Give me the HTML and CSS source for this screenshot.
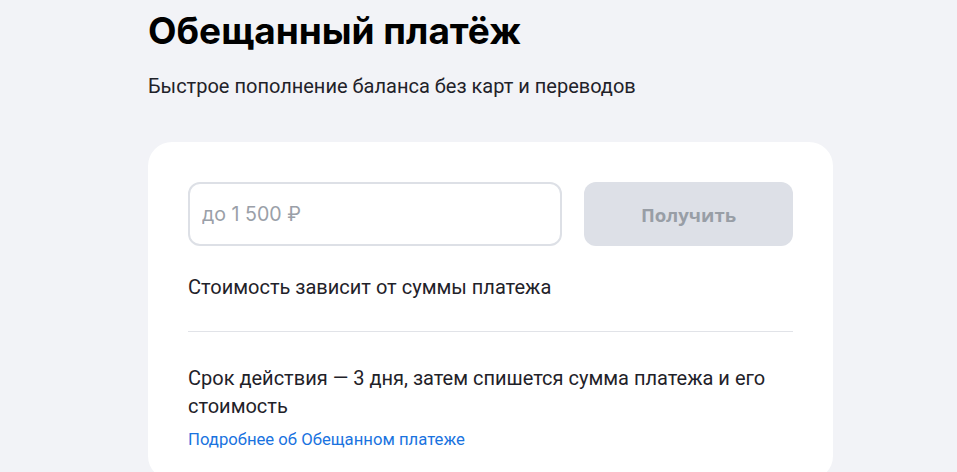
FILE: index.html
```html
<!DOCTYPE html>
<html lang="ru">
<head>
    <meta charset="UTF-8">
    <meta name="viewport" content="width=device-width, initial-scale=1.0">
    <title>Обещанный платёж</title>
    <link rel="stylesheet" href="styles.css">
</head>
<body>
<div class="container">
    <h1>Обещанный платёж</h1>
    <p class="subtitle">Быстрое пополнение баланса без карт и переводов</p>

    <div class="card">
        <div class="form-row">
            <input type="text" class="amount" placeholder="до 1 500 ₽">
            <button class="get" disabled>Получить</button>
        </div>

        <p class="note">Стоимость зависит от суммы платежа</p>

        <hr class="divider">

        <p class="info">Срок действия — 3 дня, затем спишется сумма платежа и его стоимость</p>
        <a class="more" href="#">Подробнее об Обещанном платеже</a>
    </div>
</div>
</body>
</html>
```

FILE: styles.css
```css
body {
    font-family: Roboto, "Noto Sans", sans-serif;
    margin: 0;
    background: #f2f3f7;
    color: #1f2229;
}

.container {
    width: 685px;
    margin: 0 0 0 148px;
}

h1 {
    font-family: Inter, Roboto, sans-serif;
    font-size: 37px;
    font-weight: 700;
    line-height: 44px;
    color: #000;
    margin: 9px 0 0;
}

.subtitle {
    font-size: 20px;
    line-height: 24px;
    margin: 21px 0 0;
}

.card {
    background: #fff;
    border-radius: 24px;
    margin-top: 44px;
    padding: 40px 40px 30px;
}

.form-row {
    display: flex;
    gap: 22px;
}

.amount {
    box-sizing: border-box;
    width: 374px;
    height: 64px;
    border: 2px solid #dde0e6;
    border-radius: 12px;
    padding: 0 12px;
    font-family: Inter, Roboto, sans-serif;
    font-size: 19.6px;
    color: #1f2229;
    outline: none;
}

.amount::placeholder {
    color: #9aa0a8;
}

.get {
    flex: 1;
    height: 64px;
    border: none;
    border-radius: 12px;
    background: #dde0e7;
    color: #989ea6;
    font-family: "Open Sans", Roboto, sans-serif;
    font-size: 18.6px;
    font-weight: 700;
}

.note {
    font-size: 20px;
    line-height: 28px;
    margin: 27px 0 0;
}

.divider {
    border: none;
    border-top: 1px solid #e1e3e8;
    margin: 30px 0 0;
}

.info {
    font-size: 20px;
    line-height: 28px;
    margin: 32px 0 0;
}

.more {
    display: inline-block;
    margin-top: 10px;
    font-size: 16.7px;
    line-height: 20px;
    color: #1a73e0;
    text-decoration: none;
}
```
